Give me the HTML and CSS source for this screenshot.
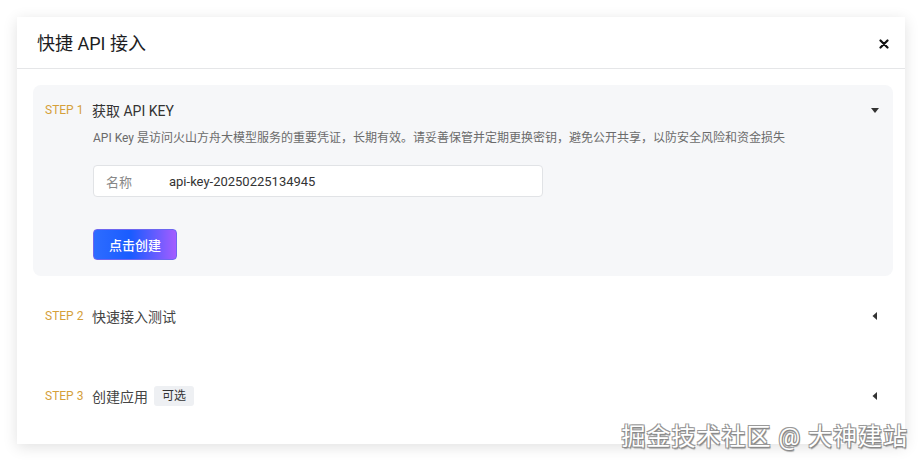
FILE: index.html
```html
<!DOCTYPE html>
<html lang="zh-CN">
<head>
  <meta charset="UTF-8" />
  <title>快捷 API 接入</title>
  <link rel="stylesheet" href="styles.css">
</head>
<body>

  <div class="modal">
    <div class="modal-header">
      <div class="modal-title">快捷 API 接入</div>
      <button class="close">
        <svg width="10" height="10" viewBox="0 0 10 10"><path d="M1.5 1.5 L8.5 8.5 M8.5 1.5 L1.5 8.5" stroke="#111" stroke-width="2.2" stroke-linecap="round"/></svg>
      </button>
    </div>

    <div class="modal-body">
      <div class="step open">
        <div class="step-head">
          <span class="step-no">STEP 1</span>
          <span class="step-title">获取 API KEY</span>
          <svg class="arrow" width="10" height="10" viewBox="0 0 10 10"><path d="M1 3 L9 3 L5 8 Z" fill="#333"/></svg>
        </div>
        <div class="step-content">
          <p class="desc">API Key 是访问火山方舟大模型服务的重要凭证，长期有效。请妥善保管并定期更换密钥，避免公开共享，以防安全风险和资金损失</p>
          <div class="field">
            <span class="field-label">名称</span>
            <span class="field-value">api-key-20250225134945</span>
          </div>
          <button class="btn-create">点击创建</button>
        </div>
      </div>

      <div class="step">
        <div class="step-head">
          <span class="step-no">STEP 2</span>
          <span class="step-title">快速接入测试</span>
          <svg class="arrow" width="10" height="10" viewBox="0 0 10 10"><path d="M7 1 L7 9 L2.5 5 Z" fill="#333"/></svg>
        </div>
      </div>

      <div class="step">
        <div class="step-head">
          <span class="step-no">STEP 3</span>
          <span class="step-title">创建应用</span>
          <span class="tag">可选</span>
          <svg class="arrow" width="10" height="10" viewBox="0 0 10 10"><path d="M7 1 L7 9 L2.5 5 Z" fill="#333"/></svg>
        </div>
      </div>
    </div>
  </div>

  <div class="watermark">掘金技术社区 @ 大神建站</div>

</body>
</html>
```

FILE: styles.css
```css
* {
  box-sizing: border-box;
  font-family: Roboto, 'Noto Sans CJK SC', sans-serif;
}

body {
  margin: 0;
  padding: 17px;
  background: #fff;
}

.modal {
  width: 888px;
  height: 427px;
  background: #fff;
  box-shadow: 0 3px 14px rgba(0, 0, 0, 0.12);
}

.modal-header {
  height: 52px;
  padding: 0 16px 0 20px;
  display: flex;
  align-items: center;
  justify-content: space-between;
  border-bottom: 1px solid #e5e6e8;
}

.modal-title {
  font-size: 18px;
  color: #1d1d1f;
  margin-top: -2px;
}

.close {
  background: none;
  border: none;
  padding: 0;
  width: 10px;
  height: 10px;
  display: flex;
  margin-top: 2px;
  cursor: pointer;
}

.modal-body {
  padding: 16px 12px 8px 16px;
  display: flex;
  flex-direction: column;
  gap: 15px;
}

.step {
  height: 65px;
  padding: 15px 13px 0 12px;
  border-radius: 8px;
}

.step.open {
  height: auto;
  padding-bottom: 16px;
  background: #f6f7f9;
}

.step-head {
  height: 20px;
  display: flex;
  align-items: center;
}

.step-no {
  width: 47px;
  font-size: 12px;
  color: #d5a03a;
}

.step-title {
  font-size: 14px;
  color: #444;
}

.step.open .step-title {
  color: #333;
}

.tag {
  margin-left: 6px;
  padding: 0 8px;
  height: 20px;
  line-height: 20px;
  font-size: 12px;
  color: #333;
  background: #eef0f3;
  border-radius: 3px;
}

.arrow {
  margin-left: auto;
}

.step-content {
  padding-left: 48px;
}

.desc {
  margin: 9px 0 0;
  font-size: 12px;
  line-height: 18px;
  color: #6b6b6b;
}

.field {
  margin-top: 18px;
  width: 450px;
  height: 32px;
  padding: 0 12px;
  display: flex;
  align-items: center;
  background: #fff;
  border: 1px solid #e1e3e6;
  border-radius: 4px;
  font-size: 13px;
}

.field-label {
  width: 63px;
  color: #888;
}

.field-value {
  color: #333;
}

.btn-create {
  margin-top: 32px;
  height: 31px;
  padding: 0 15px;
  border: 1px solid #6d66f0;
  border-radius: 4px;
  background: linear-gradient(90deg, #2d6cff 0%, #1a5cff 45%, #a45cff 100%);
  color: #fff;
  font-size: 13px;
  font-weight: 500;
  cursor: pointer;
}

.watermark {
  position: absolute;
  right: 14px;
  top: 417px;
  font-size: 24px;
  letter-spacing: 1px;
  color: #fff;
  text-shadow: 1px 1px 0 #888, -1px -1px 0 #999, 1px -1px 0 #999, -1px 1px 0 #999, 1px 2px 1px #aaa;
}
```
